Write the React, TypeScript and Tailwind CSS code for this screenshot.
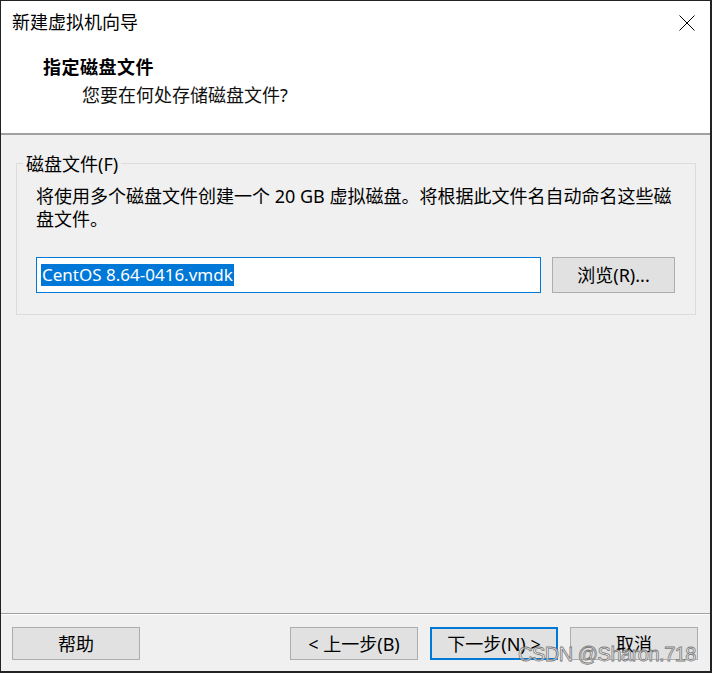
const cjk = "font-['Noto_Sans','Noto_Sans_CJK_SC',sans-serif]";

function WinButton({ label, primary }: { label: string; primary?: boolean }) {
  return (
    <button
      className={
        "w-[128px] h-[33px] bg-[#e1e1e1] text-[18px] leading-[24px] text-black flex items-center justify-center " +
        (primary ? "border-2 border-[#0078d7]" : "border border-[#adadad]")
      }
    >
      {label}
    </button>
  );
}

export default function App() {
  return (
    <div
      className={
        "relative w-[712px] h-[673px] bg-[#f0f0f0] border-t border-l border-r-2 border-b-2 border-[#222222] flex flex-col overflow-hidden " +
        cjk
      }
    >
      {/* header */}
      <div className="h-[134px] bg-white border-b-2 border-[#a0a0a0] shrink-0">
        <div className="flex items-start justify-between pt-[9px]">
          <div className="pl-[11px] text-[18px] leading-[24px] text-black">新建虚拟机向导</div>
          <svg width="16" height="16" viewBox="0 0 16 16" className="mt-[5px] mr-[15px]">
            <path d="M0.5 0.5 L15.5 15.5 M15.5 0.5 L0.5 15.5" stroke="#000" strokeWidth="1" />
          </svg>
        </div>
        <div className="mt-[21px] pl-[42px] text-[18px] leading-[24px] font-bold tracking-[0.5px] text-black">
          指定磁盘文件
        </div>
        <div className="mt-[4px] pl-[81px] text-[18px] leading-[24px] text-[#111]">
          您要在何处存储磁盘文件?
        </div>
      </div>

      {/* body */}
      <div className="flex-1">
        <div className="relative mt-[28px] ml-[15px] w-[680px] border border-[#dcdcdc] pt-[21px] pl-[19px] pb-[21px]">
          <span className="absolute -top-[12px] left-[6px] px-[3px] bg-[#f0f0f0] text-[18px] leading-[24px] text-black">
            磁盘文件(F)
          </span>
          <p className="text-[18px] leading-[23px] text-black whitespace-nowrap">
            将使用多个磁盘文件创建一个 20 GB 虚拟磁盘。将根据此文件名自动命名这些磁
            <br />
            盘文件。
          </p>
          <div className="mt-[26px] flex items-center gap-[11px]">
            <div className="w-[505px] h-[36px] border border-[#0078d7] bg-white flex items-center pl-[4px]">
              <span className="bg-[#0078d7] text-white text-[17px] leading-[22px] px-[1px]">
                CentOS 8.64-0416.vmdk
              </span>
            </div>
            <button className="w-[123px] h-[36px] bg-[#e1e1e1] border border-[#adadad] text-[18px] leading-[24px] text-black flex items-center justify-center">
              浏览(R)...
            </button>
          </div>
        </div>
      </div>

      {/* footer */}
      <div className="shrink-0 border-t border-[#a0a0a0]">
        <div className="border-t border-white pt-[12px] pb-[11px] pl-[11px] pr-[12px] flex items-center">
          <WinButton label="帮助" />
          <div className="flex-1" />
          <div className="flex gap-[12px]">
            <WinButton label="< 上一步(B)" />
            <WinButton label="下一步(N) >" primary />
            <WinButton label="取消" />
          </div>
        </div>
      </div>

      {/* watermark */}
      <div className="absolute right-[14px] bottom-[5px] text-[20px] leading-[24px] tracking-[-0.5px] font-['Liberation_Sans',sans-serif] text-white/70 [-webkit-text-stroke:0.8px_#7a7a7a]">
        CSDN @Sharon.718
      </div>
    </div>
  );
}
